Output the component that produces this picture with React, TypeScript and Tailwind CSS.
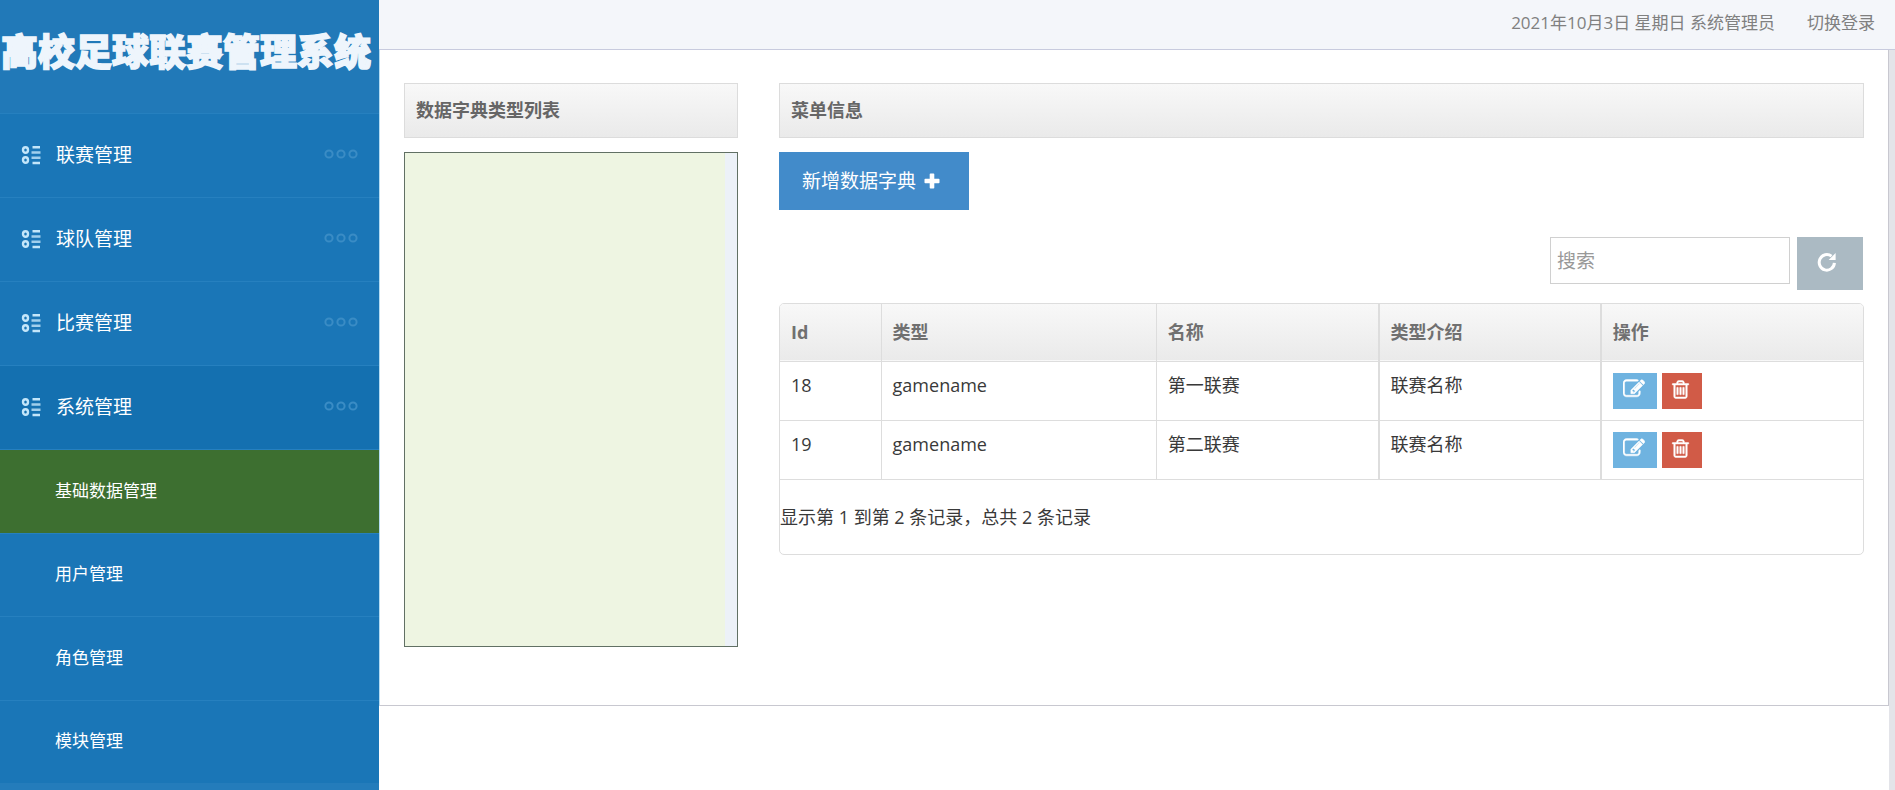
const menus = [
  { label: '联赛管理', active: false },
  { label: '球队管理', active: false },
  { label: '比赛管理', active: false },
  { label: '系统管理', active: true },
];

const subMenus = [
  { label: '基础数据管理', active: true },
  { label: '用户管理', active: false },
  { label: '角色管理', active: false },
  { label: '模块管理', active: false },
];

const rows = [
  { id: 18, type: 'gamename', name: '第一联赛', intro: '联赛名称' },
  { id: 19, type: 'gamename', name: '第二联赛', intro: '联赛名称' },
];

function MenuIcon() {
  return (
    <svg width="20" height="20" viewBox="0 0 20 20" fill="none" stroke="#c3e6fa" aria-hidden="true">
      <ellipse cx="4.5" cy="5" rx="2.5" ry="2.8" strokeWidth="2.4" />
      <ellipse cx="4.5" cy="15" rx="2.5" ry="2.800" strokeWidth="2.4" />
      <path d="M11.500 2.200h7.500M11.500 18h7.500" strokeWidth="2.600" />
      <path d="M10.500 7.500h9M10.500 12.800h9" strokeWidth="2.400" opacity="0.8" />
    </svg>
  );
}

function DotsIcon() {
  return (
    <svg width="35" height="12" viewBox="0 0 35 12" fill="none" stroke="#3a8cc5" strokeWidth="2" aria-hidden="true">
      <circle cx="5" cy="5" r="3.600" />
      <circle cx="17" cy="5" r="3.600" />
      <circle cx="29" cy="5" r="3.600" />
    </svg>
  );
}

function PlusIcon() {
  return (
    <svg width="16" height="16" viewBox="0 0 16 16" fill="currentColor" aria-hidden="true">
      <path d="M6.500 0.500h3a.8.8 0 0 1 .8.8v4.400h4.400a.8.8 0 0 1 .8.8v3a.8.8 0 0 1-.8.8h-4.400v4.400a.8.8 0 0 1-.8.8h-3a.8.8 0 0 1-.8-.8v-4.400H1.300a.8.8 0 0 1-.8-.8v-3a.8.8 0 0 1 .8-.8h4.400v-4.400a.8.8 0 0 1 .8-.8z" />
    </svg>
  );
}

function RefreshIcon() {
  return (
    <svg width="20" height="20" viewBox="0 0 20 20" fill="none" aria-hidden="true">
      <path d="M14.500 4.200A7.600 7.800 0 1 0 17.400 10.800" stroke="currentColor" strokeWidth="3" />
      <path d="M18.600 1v7h-7z" fill="currentColor" />
    </svg>
  );
}

function EditIcon() {
  return (
    <svg width="22" height="22" viewBox="0 0 1792 1792" fill="currentColor" stroke="currentColor" strokeWidth="40" aria-hidden="true">
      <path d="M888 1184l116-116-152-152-116 116v56h96v96h56zm440-720q-16-16-33 1l-350 350q-17 17-1 33t33-1l350-350q17-17 1-33zm80 594v190q0 119-84.5 203.5t-203.5 84.5h-832q-119 0-203.5-84.5t-84.5-203.5v-832q0-119 84.5-203.5t203.5-84.5h832q63 0 117 25 15 7 18 23 3 17-9 29l-49 49q-14 14-32 8-23-6-45-6h-832q-66 0-113 47t-47 113v832q0 66 47 113t113 47h832q66 0 113-47t47-113v-126q0-13 9-22l64-64q15-15 35-7t20 29zm-96-738l288 288-672 672h-288v-288zm444 132l-92 92-288-288 92-92q28-28 68-28t68 28l152 152q28 28 28 68t-28 68z" />
    </svg>
  );
}

function TrashIcon() {
  return (
    <svg width="21" height="21" viewBox="0 0 1792 1792" fill="currentColor" stroke="currentColor" strokeWidth="40" aria-hidden="true">
      <path d="M704 736v576q0 14-9 23t-23 9h-64q-14 0-23-9t-9-23v-576q0-14 9-23t23-9h64q14 0 23 9t9 23zm256 0v576q0 14-9 23t-23 9h-64q-14 0-23-9t-9-23v-576q0-14 9-23t23-9h64q14 0 23 9t9 23zm256 0v576q0 14-9 23t-23 9h-64q-14 0-23-9t-9-23v-576q0-14 9-23t23-9h64q14 0 23 9t9 23zm128 724v-948h-896v948q0 22 7 40.5t14.5 27 10.5 8.5h832q3 0 10.5-8.5t14.5-27 7-40.5zm-672-1076h448l-48-117q-7-9-17-11h-317q-10 2-17 11zm928 32v64q0 14-9 23t-23 9h-96v948q0 83-47 143.5t-113 60.5h-832q-66 0-113-58.5t-47-141.5v-952h-96q-14 0-23-9t-9-23v-64q0-14 9-23t23-9h309l70-167q15-37 54-63t79-26h320q40 0 79 26t54 63l70 167h309q14 0 23 9t9 23z" />
    </svg>
  );
}

function Sidebar() {
  return (
    <aside className="w-1/5 shrink-0 bg-[#247cbb] text-white">
      <h1 className="h-[113px] bg-[#2179b8] pt-6 pl-px text-[37px] leading-[56px] font-black whitespace-nowrap text-[#eef5fc] [-webkit-text-stroke:1.5px_#eef5fc]">
        高校足球联赛管理系统
      </h1>
      <nav>
        {menus.map((menu) => (
          <a
            key={menu.label}
            href="#"
            className={`flex h-[84px] items-center border-t border-[#2680bf] pr-5 pb-px pl-[21px] text-[19px] ${
              menu.active ? 'bg-[#1470b0]' : 'bg-[#1a76b7]'
            }`}
          >
            <MenuIcon />
            <span className="ml-[15px] flex-1">{menu.label}</span>
            <DotsIcon />
          </a>
        ))}
        <div className="grid h-[334px] grid-rows-4">
          {subMenus.map((menu) => (
            <a
              key={menu.label}
              href="#"
              className={`flex items-center border-t border-[#2680bf] pb-[2px] pl-[55px] text-[17px] ${
                menu.active ? 'bg-[#3d6f30]' : 'bg-[#1a76b7]'
              }`}
            >
              {menu.label}
            </a>
          ))}
        </div>
      </nav>
    </aside>
  );
}

function PanelTitle({ children }: { children: string }) {
  return (
    <h2 className="h-[55px] border border-[#dcdcdc] bg-linear-to-b from-[#f8f8f8] to-[#eaeaea] px-[11px] text-[18px] leading-[53px] font-bold text-[#666]">
      {children}
    </h2>
  );
}

function DictTable() {
  return (
    <div className="mt-[13px] overflow-hidden rounded-[5px] border border-[#ddd]">
      <table className="w-full table-fixed text-left text-[18px] leading-6 text-[#393939]">
        <thead>
          <tr className="h-[57px] border-b border-[#ddd] bg-linear-to-b from-[#f8f8f8] to-[#eaeaea] text-[#707070]">
            <th className="w-[101px] border-r border-[#ddd] px-[11px] font-bold">Id</th>
            <th className="w-[275px] border-r border-[#ddd] px-[11px] font-bold">类型</th>
            <th className="w-[222px] border-r-2 border-[#ddd] px-[11px] font-bold">名称</th>
            <th className="w-[222px] border-r-2 border-[#ddd] px-[11px] font-bold">类型介绍</th>
            <th className="w-[262px] px-[11px] font-bold">操作</th>
          </tr>
        </thead>
        <tbody>
          {rows.map((row) => (
            <tr key={row.id} className="h-[59px] border-b border-[#ddd] align-top">
              <td className="border-r border-[#ddd] px-[11px] pt-[11px]">{row.id}</td>
              <td className="border-r border-[#ddd] px-[11px] pt-[11px]">{row.type}</td>
              <td className="border-r-2 border-[#ddd] px-[11px] pt-[11px]">{row.name}</td>
              <td className="border-r-2 border-[#ddd] px-[11px] pt-[11px]">{row.intro}</td>
              <td className="px-[11px] pt-[11px]">
                <div className="flex gap-[5px] text-white">
                  <button type="button" aria-label="编辑" className="flex h-9 w-11 justify-center bg-[#6fb3e0] pt-[5px] pr-[2px]">
                    <EditIcon />
                  </button>
                  <button type="button" aria-label="删除" className="flex h-9 w-10 justify-center bg-[#d15b47] pt-[6px] pr-[2px]">
                    <TrashIcon />
                  </button>
                </div>
              </td>
            </tr>
          ))}
        </tbody>
      </table>
      <p className="h-[74px] text-[18px] leading-[74px] text-[#393939]">
        显示第 1 到第 2 条记录，总共 2 条记录
      </p>
    </div>
  );
}

export default function App() {
  return (
    <div className="flex min-h-screen bg-white font-['Open_Sans','Noto_Sans_CJK_SC',sans-serif]">
      <Sidebar />
      <div className="flex min-w-0 flex-1 flex-col">
        <header className="flex h-[50px] items-center justify-end gap-8 border-b border-[#c8cbde] bg-[#f4f6fa] pr-5 pb-1 text-[17px] text-[#808080]">
          <span>2021年10月3日 星期日 系统管理员</span>
          <a href="#">切换登录</a>
        </header>
        <div className="flex-1 border-r-6 border-[#e3e4e9]">
          <main className="flex h-[656px] gap-[41px] border-r border-b border-l border-[#c8c8d0] border-l-[#b5dcf2] px-6 pt-[33px]">
            <section className="w-[334px] shrink-0">
              <PanelTitle>数据字典类型列表</PanelTitle>
              <div className="mt-[14px] h-[495px] border border-[#617064] bg-[#eef5e2]">
                <div className="ml-auto h-full w-3 bg-[#ecf1f8]" />
              </div>
            </section>
            <section className="min-w-0 flex-1">
              <PanelTitle>菜单信息</PanelTitle>
              <button
                type="button"
                className="mt-[14px] flex h-[58px] w-[190px] items-center gap-2 bg-[#428bca] pl-[23px] text-[19px] text-white"
              >
                新增数据字典
                <PlusIcon />
              </button>
              <div className="mt-[27px] flex justify-end gap-[7px] pr-px">
                <input
                  type="text"
                  aria-label="搜索"
                  placeholder="搜索"
                  className="h-[47px] w-[240px] border border-[#d0d0d0] px-[6px] text-[19px] placeholder:text-[#999]"
                />
                <button type="button" aria-label="刷新" className="h-[53px] w-[66px] bg-[#abbac3] pb-1 pl-5 text-white">
                  <RefreshIcon />
                </button>
              </div>
              <DictTable />
            </section>
          </main>
        </div>
      </div>
    </div>
  );
}
